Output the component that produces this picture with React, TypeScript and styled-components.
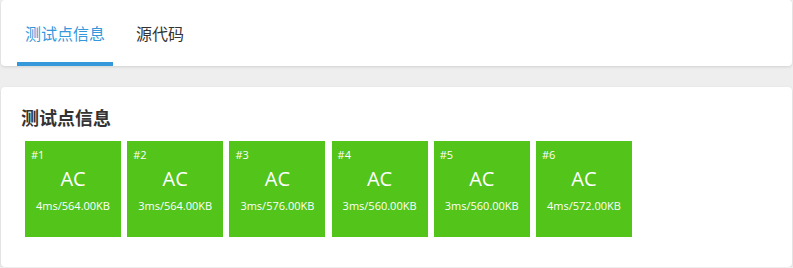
import React from 'react';
import styled, { createGlobalStyle } from 'styled-components';

type CaseType = {
  id: number;
  status: string;
  time: number;
  memory: string;
};

const cases: CaseType[] = [
  { id: 1, status: 'AC', time: 4, memory: '564.00KB' },
  { id: 2, status: 'AC', time: 3, memory: '564.00KB' },
  { id: 3, status: 'AC', time: 3, memory: '576.00KB' },
  { id: 4, status: 'AC', time: 3, memory: '560.00KB' },
  { id: 5, status: 'AC', time: 3, memory: '560.00KB' },
  { id: 6, status: 'AC', time: 4, memory: '572.00KB' },
];

const GlobalStyle = createGlobalStyle`
  body {
    margin: 0;
    background: #eeeeee;
    font-family: "Open Sans", "Noto Sans CJK SC", sans-serif;
  }
`;

const Page = styled.div`
  padding: 0 1px;
  width: 791px;
  display: flex;
  flex-direction: column;
  gap: 21px;
`;

const Card = styled.div`
  background: #fff;
  border-radius: 4px;
  box-shadow: 0 1px 3px rgba(0, 0, 0, 0.12);
`;

const TabBar = styled(Card)`
  height: 66px;
  display: flex;
  padding-left: 16px;
  box-sizing: border-box;
`;

const Tab = styled.div<{ active?: boolean }>`
  display: flex;
  align-items: center;
  padding: 4px 8px 0;
  margin-right: 15px;
  font-size: 16px;
  color: ${({ active }) => (active ? '#3498db' : '#333')};
  border-bottom: 4px solid ${({ active }) => (active ? '#3498db' : 'transparent')};
`;

const Panel = styled(Card)`
  height: 180px;
  padding: 18px 0 0 19px;
  box-sizing: border-box;
`;

const Title = styled.h3`
  margin: 0 0 10px 1px;
  font-size: 18px;
  font-weight: bold;
  color: #333;
  line-height: 26px;
`;

const CaseList = styled.div`
  display: flex;
  gap: 6.2px;
  padding-left: 5px;
`;

const CaseBox = styled.div`
  width: 96px;
  height: 96px;
  background: #52c41a;
  color: #fff;
  display: flex;
  flex-direction: column;
  box-sizing: border-box;
  padding: 6px 6px 0;
`;

const CaseId = styled.div`
  font-size: 11px;
  line-height: 16px;
`;

const CaseStatus = styled.div`
  text-align: center;
  font-size: 20px;
  line-height: 28px;
  margin-top: 2px;
`;

const CaseDetail = styled.div`
  text-align: center;
  font-size: 11px;
  line-height: 16px;
  margin-top: 5px;
  white-space: nowrap;
`;

export default function App() {
  return (
    <>
      <GlobalStyle />
      <Page>
        <TabBar>
          <Tab active>测试点信息</Tab>
          <Tab>源代码</Tab>
        </TabBar>
        <Panel>
          <Title>测试点信息</Title>
          <CaseList>
            {cases.map((c) => (
              <CaseBox key={c.id}>
                <CaseId>#{c.id}</CaseId>
                <CaseStatus>{c.status}</CaseStatus>
                <CaseDetail>
                  {c.time}ms/{c.memory}
                </CaseDetail>
              </CaseBox>
            ))}
          </CaseList>
        </Panel>
      </Page>
    </>
  );
}
